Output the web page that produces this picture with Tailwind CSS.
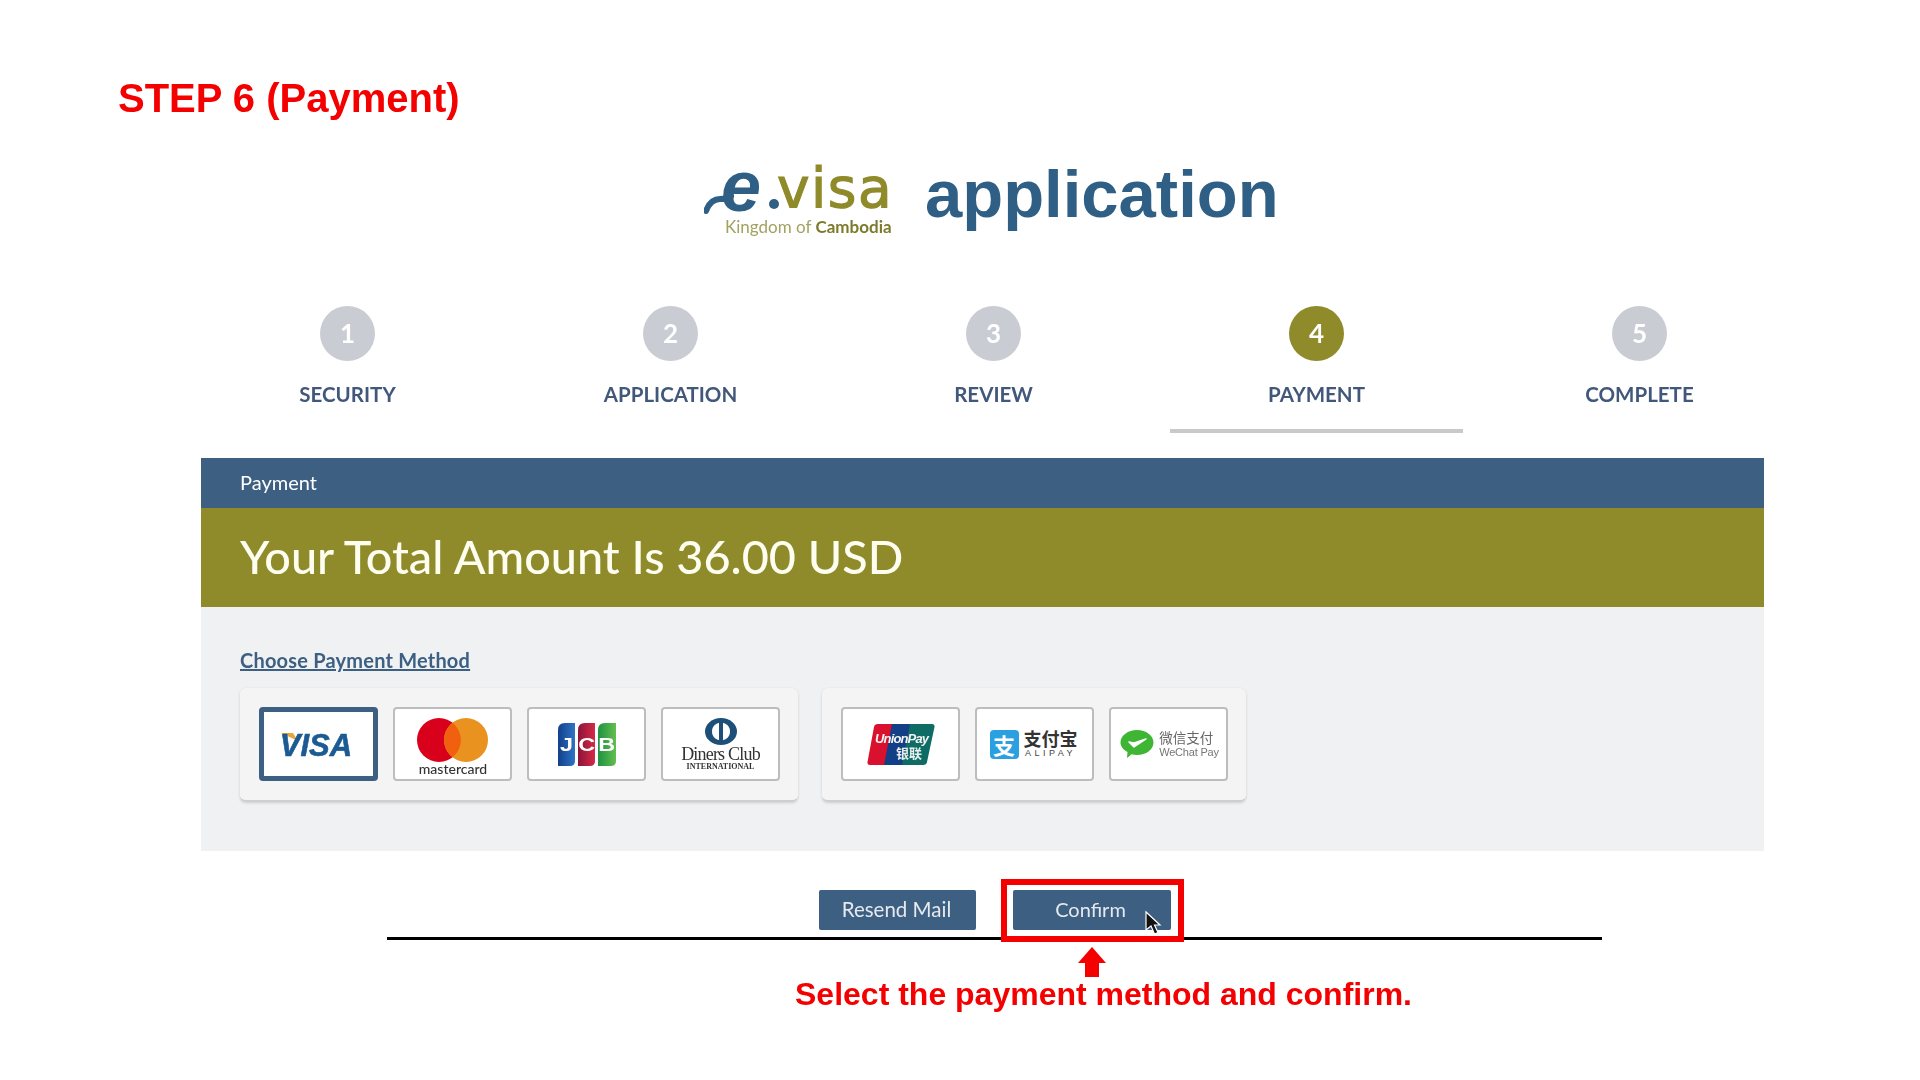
<!DOCTYPE html>
<html lang="en">
<head>
    <meta charset="UTF-8">
    <meta name="viewport" content="width=device-width, initial-scale=1.0">
    <title>STEP 6 (Payment)</title>
    <script src="https://cdn.jsdelivr.net/npm/@tailwindcss/browser@4"></script>
</head>
<body class="bg-white">
    <div class="relative w-[1920px] h-[1080px] overflow-hidden blur-[0.4px] font-['Lato',sans-serif]">
        <h1 class="ml-[118px] pt-[74px] text-[40px] leading-[48px] font-bold text-[#f40000] font-['Liberation_Sans',sans-serif]">STEP 6 (Payment)</h1>

        <div class="ml-[186px] w-[1615px]">
            <!-- logo -->
            <div class="mt-[38px] h-[80px] flex items-start pl-[518px]">
                <div class="relative w-[196px] h-[80px]">
                    <svg class="absolute left-0 top-[30px]" width="40" height="26" viewBox="0 0 40 26">
                        <path d="M2 21C5 13 10 9 16 9c4 0 7 0 11-3" fill="none" stroke="#2f5f85" stroke-width="6" stroke-linecap="round"/>
                    </svg>
                    <span class="absolute left-[17px] top-[-14px] text-[72px] leading-[80px] font-bold italic text-[#2f5f85] font-['Liberation_Sans',sans-serif]">e</span>
                    <span class="absolute left-[65px] top-[39px] w-[10px] h-[10px] rounded-full bg-[#2f5f85]"></span>
                    <span class="absolute left-[73px] top-[-4px] text-[55px] leading-[64px] tracking-[1.500px] font-normal text-[#8f8a2a] [-webkit-text-stroke:1.200px_#8f8a2a] font-['DejaVu_Sans',sans-serif]">visa</span>
                    <span class="absolute left-[21px] top-[57px] whitespace-nowrap text-[17px] leading-[20px] text-[#a3a262]">Kingdom of <b class="font-bold text-[#7d7a2c]">Cambodia</b></span>
                </div>
                <span class="ml-[25px] mt-[-4px] text-[67px] leading-[76px] font-bold text-[#2f5f85] font-['Liberation_Sans',sans-serif]">application</span>
            </div>

            <!-- steps -->
            <div class="mt-[66px] grid grid-cols-5 text-center">
                <div class="flex flex-col items-center">
                    <div class="w-[55px] h-[55px] rounded-full bg-[#c9ccd3] flex items-center justify-center text-[26px] font-bold text-white">1</div>
                    <div class="mt-[21px] text-[20.500px] leading-[24px] font-bold text-[#41587a]">SECURITY</div>
                </div>
                <div class="flex flex-col items-center">
                    <div class="w-[55px] h-[55px] rounded-full bg-[#c9ccd3] flex items-center justify-center text-[26px] font-bold text-white">2</div>
                    <div class="mt-[21px] text-[20.500px] leading-[24px] font-bold text-[#41587a]">APPLICATION</div>
                </div>
                <div class="flex flex-col items-center">
                    <div class="w-[55px] h-[55px] rounded-full bg-[#c9ccd3] flex items-center justify-center text-[26px] font-bold text-white">3</div>
                    <div class="mt-[21px] text-[20.500px] leading-[24px] font-bold text-[#41587a]">REVIEW</div>
                </div>
                <div class="flex flex-col items-center">
                    <div class="w-[55px] h-[55px] rounded-full bg-[#8f8a2a] flex items-center justify-center text-[26px] font-bold text-white">4</div>
                    <div class="mt-[21px] text-[20.500px] leading-[24px] font-bold text-[#41587a]">PAYMENT</div>
                    <div class="mt-[23px] w-[293px] h-[4px] bg-[#c9c9c9]"></div>
                </div>
                <div class="flex flex-col items-center">
                    <div class="w-[55px] h-[55px] rounded-full bg-[#c9ccd3] flex items-center justify-center text-[26px] font-bold text-white">5</div>
                    <div class="mt-[21px] text-[20.500px] leading-[24px] font-bold text-[#41587a]">COMPLETE</div>
                </div>
            </div>

            <!-- payment panel -->
            <div class="mt-[25px] ml-[15px] w-[1563px]">
                <div class="h-[50px] bg-[#3c5f82] pl-[39px] pb-[2px] flex items-center text-[20px] text-white">Payment</div>
                <div class="h-[99px] bg-[#8f8a2a] pl-[39px] pb-[2px] flex items-center text-[46.800px] font-medium text-[#fdfdf0]">Your Total Amount Is 36.00 USD</div>
                <div class="h-[244px] bg-[#f0f1f3] pl-[39px] pt-[41px]">
                    <a href="#" class="block text-[20px] leading-[24px] tracking-[0.2px] font-bold text-[#3c5f82] underline">Choose Payment Method</a>
                    <div class="mt-[16px] flex gap-[24px]">
                        <div class="flex gap-[15px] pl-[19px] pr-[18px] py-[19px] rounded-[6px] bg-[#f4f4f5] border-b-2 border-[#cfcfd2] shadow-[0_1px_3px_rgba(0,0,0,0.15)]">
                            <div class="w-[119px] h-[74px] rounded-[4px] border-[5px] border-[#3c5f82] bg-white flex items-center justify-center">
                                <svg width="90" height="40" viewBox="0 0 90 40">
                                    <path d="M7 9h12l5 8z" fill="#e8a53a"/>
                                    <text x="42" y="32" text-anchor="middle" class="font-['Liberation_Sans',sans-serif]" font-size="31" font-weight="700" font-style="italic" fill="#1b5a92" stroke="#1b5a92" stroke-width="0.600">VISA</text>
                                </svg>
                            </div>
                            <div class="w-[119px] h-[74px] rounded-[4px] border-2 border-[#bdbdbd] bg-white flex items-center justify-center">
                                <svg width="100" height="66" viewBox="0 0 100 66">
                                    <circle cx="36" cy="29" r="22" fill="#d9001b"/>
                                    <circle cx="63" cy="29" r="22" fill="#ea921f"/>
                                    <path d="M49.500 11.700a22 22 0 0 1 0 34.600a22 22 0 0 1 0-34.600z" fill="#f0600f"/>
                                    <text x="50" y="63" text-anchor="middle" class="font-['Lato',sans-serif]" font-size="14" font-weight="500" fill="#333">mastercard</text>
                                </svg>
                            </div>
                            <div class="w-[119px] h-[74px] rounded-[4px] border-2 border-[#bdbdbd] bg-white flex items-center justify-center">
                                <svg width="58" height="43" viewBox="0 0 58 43">
                                    <defs>
                                        <linearGradient id="jcbBlue"><stop offset="0" stop-color="#123f8c"/><stop offset="1" stop-color="#2f74c4"/></linearGradient>
                                        <linearGradient id="jcbRed"><stop offset="0" stop-color="#8c1436"/><stop offset="1" stop-color="#d42a48"/></linearGradient>
                                        <linearGradient id="jcbGreen"><stop offset="0" stop-color="#1f9142"/><stop offset="1" stop-color="#63bf4d"/></linearGradient>
                                    </defs>
                                    <path d="M7 0h10v38q0 5-5 5H0V7q0-7 7-7z" fill="url(#jcbBlue)"/>
                                    <path d="M27 0h10v38q0 5-5 5H20V7q0-7 7-7z" fill="url(#jcbRed)"/>
                                    <path d="M47 0h11v38q0 5-5 5H40V7q0-7 7-7z" fill="url(#jcbGreen)"/>
                                    <g transform="scale(1.3 1)" class="font-['Liberation_Sans',sans-serif]" font-size="18" font-weight="700" fill="#fff" text-anchor="middle">
                                        <text x="6.500" y="28">J</text>
                                        <text x="22" y="28">C</text>
                                        <text x="37.500" y="28">B</text>
                                    </g>
                                </svg>
                            </div>
                            <div class="w-[119px] h-[74px] rounded-[4px] border-2 border-[#bdbdbd] bg-white flex flex-col items-center justify-center">
                                <svg width="34" height="29" viewBox="0 0 34 29">
                                    <ellipse cx="17" cy="14.500" rx="16" ry="13.500" fill="#1d4f78"/>
                                    <path d="M15 6v17c-4-.500-7-4-7-8.500S11 6.500 15 6z" fill="#fff"/>
                                    <path d="M19 6v17c4-.500 7-4 7-8.500S23 6.500 19 6z" fill="#fff"/>
                                </svg>
                                <div class="text-[18px] leading-[16px] tracking-[-0.8px] text-[#333] font-['Liberation_Serif',serif]">Diners Club</div>
                                <div class="text-[8px] leading-[9px] font-bold text-[#333] font-['Liberation_Serif',serif]">INTERNATIONAL</div>
                            </div>
                        </div>
                        <div class="flex gap-[15px] pl-[19px] pr-[18px] py-[19px] rounded-[6px] bg-[#f4f4f5] border-b-2 border-[#cfcfd2] shadow-[0_1px_3px_rgba(0,0,0,0.15)]">
                            <div class="w-[119px] h-[74px] rounded-[4px] border-2 border-[#bdbdbd] bg-white flex items-center justify-center">
                                <svg width="68" height="43" viewBox="0 0 68 43">
                                    <path d="M11 1h15L18 42H3q-3 0-2.500-3L7 4q.500-3 4-3z" fill="#d9102e"/>
                                    <path d="M25 1h19L36 42H17z" fill="#123f86"/>
                                    <path d="M43 1h22q3 0 2.500 3L60 39q-.500 3-4 3H35z" fill="#0f6c64"/>
                                    <text x="35" y="20" text-anchor="middle" textLength="54" class="font-['Liberation_Sans',sans-serif]" font-size="13" font-weight="700" font-style="italic" fill="#f4f4f4">UnionPay</text>
                                    <text x="42" y="35" text-anchor="middle" class="font-['Noto_Sans_CJK_SC',sans-serif]" font-size="13" font-weight="700" fill="#e8eeee">银联</text>
                                </svg>
                            </div>
                            <div class="w-[119px] h-[74px] rounded-[4px] border-2 border-[#bdbdbd] bg-white flex items-center justify-center gap-[5px] pr-[2px]">
                                <div class="w-[29px] h-[29px] rounded-[4px] bg-[#2ba0e0] flex items-center justify-center text-[22px] leading-none font-bold text-white font-['Noto_Sans_CJK_SC',sans-serif]">支</div>
                                <div class="flex flex-col items-center">
                                    <div class="text-[18px] leading-[19px] font-bold text-[#333] font-['Noto_Sans_CJK_SC',sans-serif]">支付宝</div>
                                    <div class="text-[9px] leading-[11px] tracking-[3.500px] text-[#444] font-['Liberation_Sans',sans-serif]">ALIPAY</div>
                                </div>
                            </div>
                            <div class="w-[119px] h-[74px] rounded-[4px] border-2 border-[#bdbdbd] bg-white flex items-center justify-center gap-[5px] pl-[2px]">
                                <svg width="34" height="30" viewBox="0 0 34 30">
                                    <path d="M17 1c9 0 16.500 5.500 16.500 12.500S26 26 17 26q-3 0-5.500-.7L7 29l.5-6C3 20.500.5 17.500.5 13.500 .5 6.500 8 1 17 1z" fill="#3fb534"/>
                                    <path d="M9 13l5 5 12-8-12 4z" fill="#fff" stroke="#fff" stroke-width="1.500" stroke-linejoin="round"/>
                                </svg>
                                <div class="flex flex-col items-start">
                                    <div class="text-[13.500px] leading-[16px] text-[#666] font-['Noto_Sans_CJK_SC',sans-serif]">微信支付</div>
                                    <div class="text-[11px] leading-[14px] tracking-[-0.2px] text-[#777] font-['Liberation_Sans',sans-serif]">WeChat Pay</div>
                                </div>
                            </div>
                        </div>
                    </div>
                </div>
            </div>
        </div>

        <!-- buttons -->
        <div class="mt-[39px] ml-[819px] flex gap-[37px]">
            <button class="w-[157px] h-[40px] rounded-[2px] bg-[#3c5f82] pb-[2px] pr-[2px] text-[20.500px] text-[#e6e9ee]">Resend Mail</button>
            <button class="w-[158px] h-[40px] rounded-[2px] bg-[#3c5f82] pb-[2px] pr-[3px] text-[20px] text-[#e6e9ee]">Confirm</button>
        </div>

        <!-- annotations over the screenshot -->
        <div class="absolute left-[387px] top-[937px] w-[1215px] h-[3px] bg-black"></div>
        <div class="absolute left-[1001px] top-[879px] w-[183px] h-[63px] border-[6px] border-[#f40000]"></div>
        <svg class="absolute left-[1144px] top-[910px]" width="18" height="26" viewBox="0 0 18 26">
            <path d="M2 2v18l5-4 3.500 8 3.500-1.500L10.500 15H16z" fill="#111" stroke="#fff" stroke-width="1.200"/>
        </svg>
        <svg class="absolute left-[1078px] top-[947px]" width="28" height="30" viewBox="0 0 28 30">
            <path d="M14 0l14 16h-7v14H7V16H0z" fill="#f40000"/>
        </svg>
        <div class="absolute left-[795px] top-[975px] whitespace-nowrap text-[32px] leading-[38px] font-bold text-[#f40000] font-['Liberation_Sans',sans-serif]">Select the payment method and confirm.</div>
    </div>
</body>
</html>
